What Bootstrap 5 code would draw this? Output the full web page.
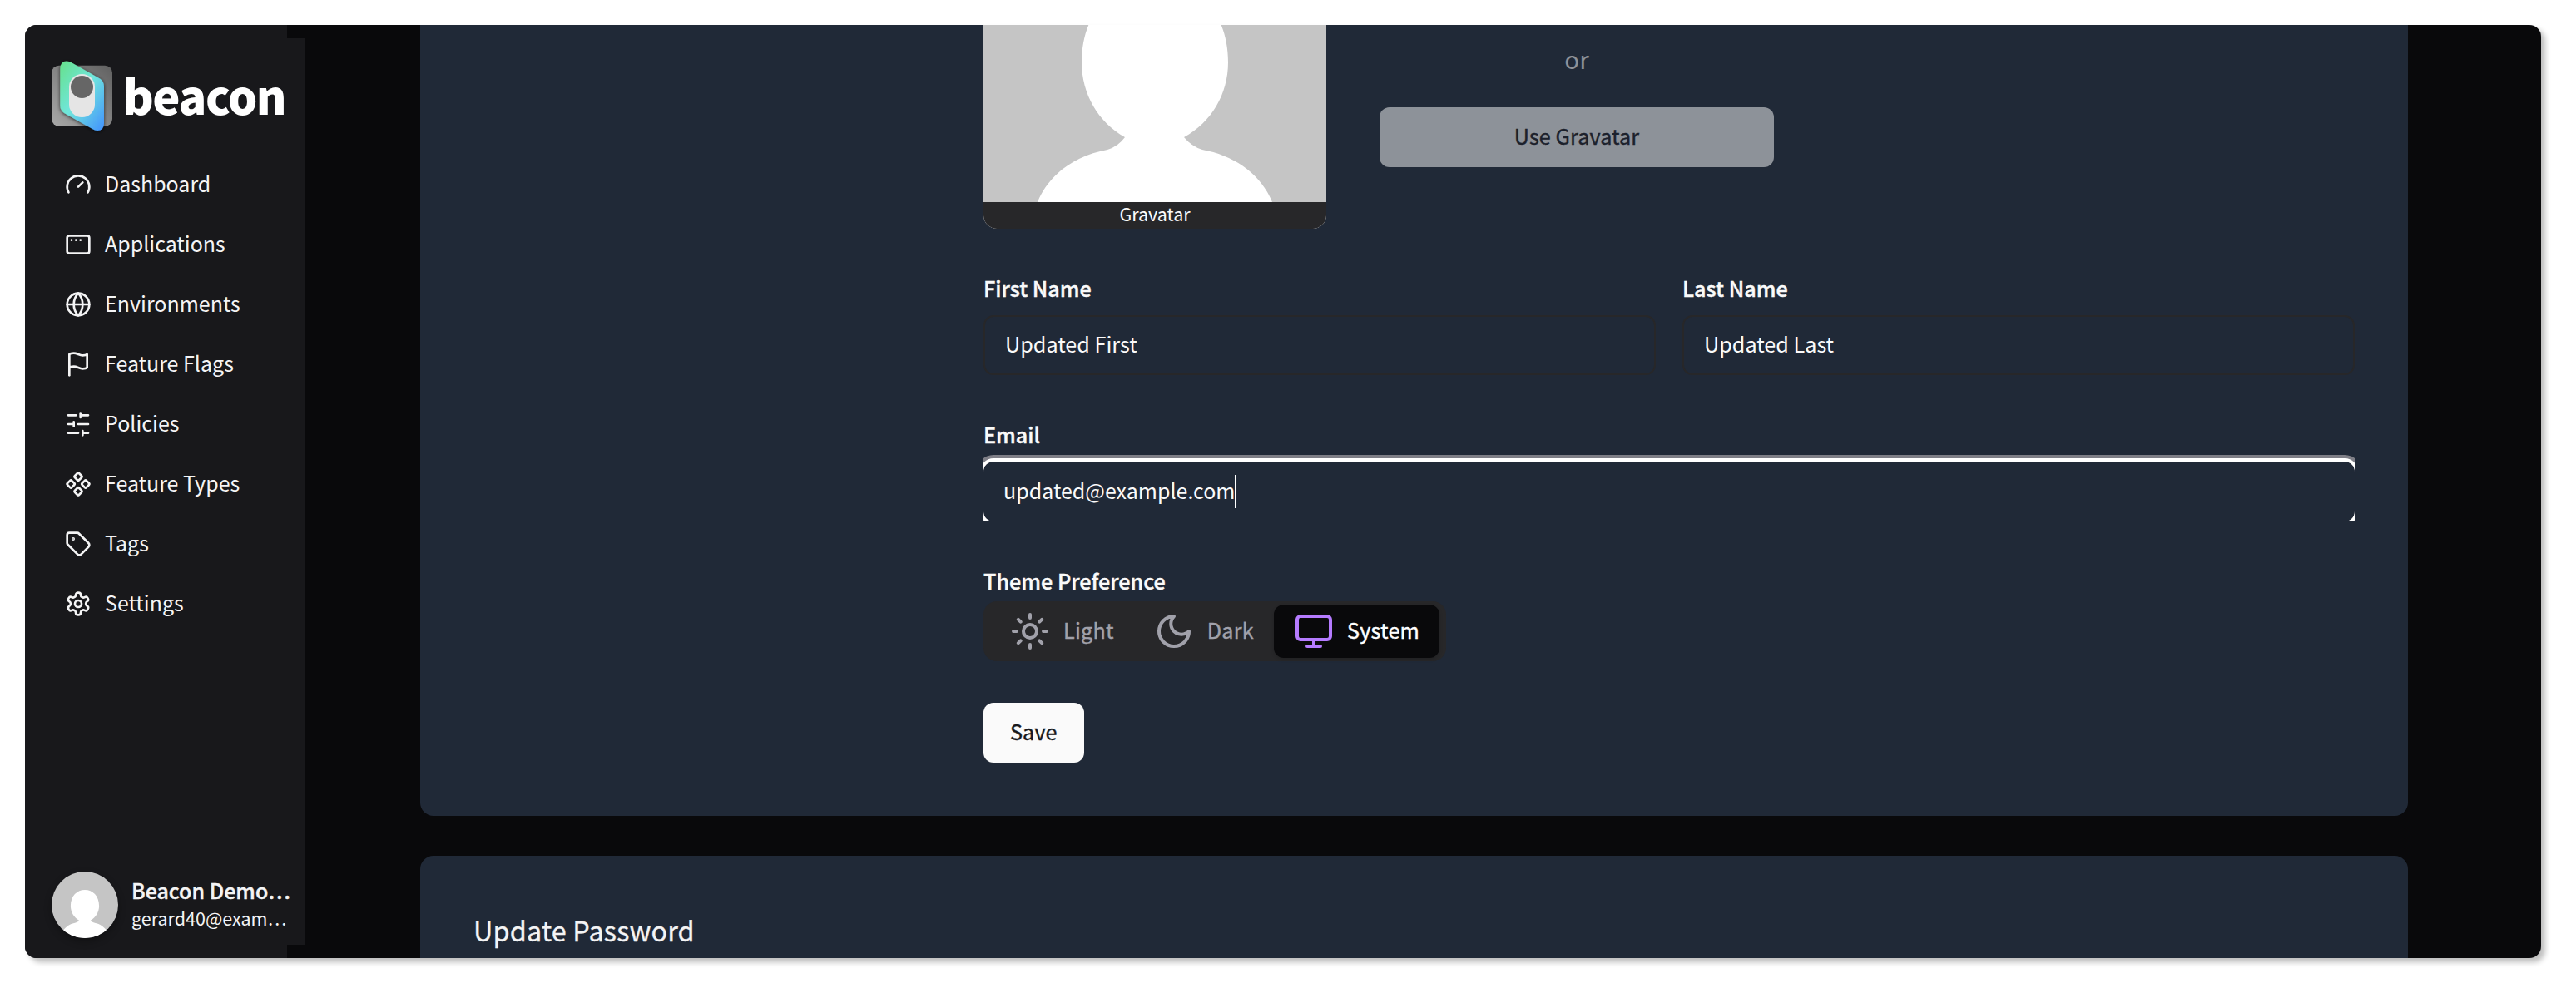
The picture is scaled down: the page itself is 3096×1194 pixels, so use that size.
<!DOCTYPE html>
<html lang="en">
<head>
<meta charset="utf-8">
<title>Beacon - Profile</title>
<link rel="stylesheet" href="https://cdn.jsdelivr.net/npm/bootstrap@5.3.0/dist/css/bootstrap.min.css">
<style>
  body { margin: 0; padding: 30px 42px 42px 30px; background: #fff; color: #fafafa; font-family: "Noto Sans CJK SC", "Noto Sans", sans-serif; font-size: 25.2px; line-height: 28px; }
  .app-window { height: 1122px; background: #09090b; border-radius: 14px; box-shadow: 5px 5px 6px rgba(0,0,0,.25); }
  .side { width: 336px; background: #18181b; padding: 38px 0 24px; }
  .side::before, .side::after { content: ""; position: absolute; right: 0; width: 21px; height: 16px; background: #09090b; }
  .side::before { top: 0; }
  .side::after { bottom: 0; }
  .brand { margin: 0 0 22px 28px; height: 96px; }
  .brand svg { width: 84px; height: 96px; }
  .brand-name { font-weight: 900; font-size: 56px; line-height: 90px; letter-spacing: -1.5px; color: #fff; margin-left: 6px; padding-bottom: 5px; }
  .side-nav .nav-link { height: 72px; padding: 0 0 0 48px; gap: 16px; color: #f4f4f5; font-size: 25px; }
  .side-nav svg { width: 32px; height: 32px; }
  .lift { padding-bottom: 4px; }
  .stroke-icon { fill: none; stroke: currentColor; stroke-width: 2; stroke-linecap: round; stroke-linejoin: round; flex: none; }
  .user-row { padding-left: 32px; gap: 16px; }
  .user-pic { width: 80px; height: 80px; border-radius: 50%; box-shadow: 0 4px 10px rgba(0,0,0,.3); }
  .user-text { padding-bottom: 5px; color: #f4f4f5; }
  .user-name { font-weight: 500; font-size: 25px; line-height: 36px; -webkit-text-stroke: .4px currentColor; }
  .user-mail { font-size: 21.5px; line-height: 30px; padding-top: 1px; }
  .page-main { padding: 0 160px 0 139px; gap: 48px; }
  .panel { background: #202937; border: 0; border-radius: 0 0 16px 16px; color: inherit; flex: none; }
  .panel-profile { height: 951px; padding: 0 64px 64px; }
  .panel-password { height: 200px; border-radius: 16px 16px 0 0; padding: 71px 64px 0; }
  .panel-password h2 { font-size: 32.4px; line-height: 36px; font-weight: 400; margin: 0; color: #f4f4f5; letter-spacing: .16px; -webkit-text-stroke: .3px currentColor; }
  .intro-col { width: 613px; flex: none; }
  .fields { gap: 57px; }
  .avatar-row { gap: 64px; }
  .avatar-card { width: 412px; height: 245px; border-radius: 0 0 16px 16px; background: #c5c5c5; }
  .avatar-card svg { height: 213px; width: 412px; }
  .avatar-label { height: 32px; line-height: 28px; font-size: 21.5px; background: #272729; border-radius: 0 0 16px 16px; }
  .avatar-actions { width: 474px; padding-top: 22px; }
  .or-text { font-size: 29.5px; line-height: 36px; margin-bottom: 41px; color: #8d9198; }
  .btn-main { height: 72px; border: 0; border-radius: 12px; font-size: 25.2px; line-height: 28px; font-weight: 400; letter-spacing: .1px; -webkit-text-stroke: .4px currentColor; padding: 0 32px 4px; background: #fafafa; color: #18181b; }
  .btn-main:disabled { background: #8d9299; color: #1c212c; opacity: 1; }
  .field-label { font-weight: 500; margin: 0 0 19px; line-height: 28px; display: block; -webkit-text-stroke: .4px currentColor; }
  .field-label.tight { margin-bottom: 11px; }
  .name-row { gap: 32px; }
  .form-control.field-input, .form-control.field-input:focus { height: 72px; border: 2px solid #272729; border-radius: 12px; background: transparent; color: #fafafa; font-size: 25.2px; padding: 0 24px 4px; line-height: 28px; box-shadow: none; }
  .ring-clip { padding-top: 8px; height: 80px; overflow: hidden; }
  .form-control.field-input.field-focus { border: 0; font-size: 25px; box-shadow: 0 0 0 4px #fff, 0 0 0 8px #7e7e86; }
  .caret { width: 2px; height: 40px; margin: 4px 0 0 -1px; background: #fff; }
  .theme-toggle { height: 72px; background: #272729; border-radius: 16px; padding: 4px 8px; width: fit-content; }
  .theme-opt { height: 64px; padding: 0 24px; gap: 16px; border-radius: 12px; color: #a1a1aa; letter-spacing: .24px; -webkit-text-stroke: .4px currentColor; }
  .theme-opt.on { background: #09090b; color: #fff; box-shadow: 0 2px 4px rgba(0,0,0,.15); }
  .theme-opt svg { width: 48px; height: 48px; }
  .theme-opt.on svg { color: #b57bff; }
  .save-btn { margin-top: -7px; align-self: flex-start; }
</style>
<script src="https://cdn.jsdelivr.net/npm/bootstrap@5.3.0/dist/js/bootstrap.bundle.min.js"></script>
</head>
<body>
<svg width="0" height="0" class="position-absolute">
  <symbol id="person" viewBox="0 0 412 412">
    <path fill="#fff" d="M170 302C138 284 118 250 118 212C118 150 158 113 206 113S294 150 294 212C294 250 274 284 241 302Q250 313 263 317C302 324 334 347 347 380Q353 395 354 412H58Q59 395 65 380C78 347 110 324 149 317Q162 313 170 302Z"/>
  </symbol>
</svg>
<div class="app-window d-flex overflow-hidden">
  <aside class="side position-relative d-flex flex-column flex-shrink-0">
    <div class="brand d-flex align-items-center">
      <svg viewBox="58 68 84 96">
        <defs>
          <linearGradient id="gTile" x1="0" y1="1" x2="1" y2="0"><stop offset="0" stop-color="#a8a8a8"/><stop offset="1" stop-color="#606060"/></linearGradient>
          <linearGradient id="gFace" x1="0" y1="0" x2=".9" y2="1"><stop offset="0" stop-color="#66e08a"/><stop offset=".5" stop-color="#70e6dc"/><stop offset="1" stop-color="#4699fb"/></linearGradient>
          <filter id="soft" x="-30%" y="-30%" width="160%" height="160%"><feDropShadow dx="0" dy="1" stdDeviation="2.2" flood-opacity=".7"/></filter>
        </defs>
        <rect x="62" y="78.7" width="73" height="73.3" rx="9" fill="url(#gTile)"/>
        <path filter="url(#soft)" fill="url(#gFace)" d="M72.3 83Q72.3 73.5 80 73.5Q83 73.5 86 75.3L120 94.5Q125 97.500 125 104V148Q125 157 117 157Q114 157 111 155L78 136.500Q72.300 133 72.300 127Z"/>
        <rect x="83" y="89" width="31" height="52" rx="15.500" fill="#e5e5e5"/>
        <circle cx="98.500" cy="104.500" r="13.500" fill="#666"/>
      </svg>
      <span class="brand-name">beacon</span>
    </div>
    <nav class="side-nav nav flex-column flex-nowrap">
      <a class="nav-link d-flex align-items-center"><svg class="stroke-icon" viewBox="0 0 24 24"><path d="m12 14 4-4"/><path d="M3.340 19a10 10 0 1 1 17.320 0"/></svg><span class="lift">Dashboard</span></a>
      <a class="nav-link d-flex align-items-center"><svg class="stroke-icon" viewBox="0 0 24 24"><rect width="20" height="16" x="2" y="4" rx="2"/><path d="M6 8h.01M10 8h.01M14 8h.01"/></svg><span class="lift">Applications</span></a>
      <a class="nav-link d-flex align-items-center"><svg class="stroke-icon" viewBox="0 0 24 24"><circle cx="12" cy="12" r="10"/><path d="M12 2a14.500 14.500 0 0 0 0 20 14.500 14.500 0 0 0 0-20"/><path d="M2 12h20"/></svg><span class="lift">Environments</span></a>
      <a class="nav-link d-flex align-items-center"><svg class="stroke-icon" viewBox="0 0 24 24"><path d="M4 15s1-1 4-1 5 2 8 2 4-1 4-1V3s-1 1-4 1-5-2-8-2-4 1-4 1z"/><path d="M4 22v-7"/></svg><span class="lift">Feature Flags</span></a>
      <a class="nav-link d-flex align-items-center"><svg class="stroke-icon" viewBox="0 0 24 24"><path d="M21 4h-7M10 4H3M21 12h-9M8 12H3M21 20h-5M12 20H3M14 2v4M8 10v4M16 18v4"/></svg><span class="lift">Policies</span></a>
      <a class="nav-link d-flex align-items-center"><svg class="stroke-icon" viewBox="0 0 24 24"><path d="M15.536 11.293a1 1 0 0 0 0 1.414l2.376 2.377a1 1 0 0 0 1.414 0l2.377-2.377a1 1 0 0 0 0-1.414l-2.377-2.377a1 1 0 0 0-1.414 0z"/><path d="M2.297 11.293a1 1 0 0 0 0 1.414l2.377 2.377a1 1 0 0 0 1.414 0l2.377-2.377a1 1 0 0 0 0-1.414L6.088 8.916a1 1 0 0 0-1.414 0z"/><path d="M8.916 17.912a1 1 0 0 0 0 1.415l2.377 2.376a1 1 0 0 0 1.414 0l2.377-2.376a1 1 0 0 0 0-1.415l-2.377-2.376a1 1 0 0 0-1.414 0z"/><path d="M8.916 4.674a1 1 0 0 0 0 1.414l2.377 2.376a1 1 0 0 0 1.414 0l2.377-2.376a1 1 0 0 0 0-1.414l-2.377-2.377a1 1 0 0 0-1.414 0z"/></svg><span class="lift">Feature Types</span></a>
      <a class="nav-link d-flex align-items-center"><svg class="stroke-icon" viewBox="0 0 24 24"><path d="M12.586 2.586A2 2 0 0 0 11.172 2H4a2 2 0 0 0-2 2v7.172a2 2 0 0 0 .586 1.414l8.704 8.704a2.426 2.426 0 0 0 3.420 0l6.580-6.580a2.426 2.426 0 0 0 0-3.420z"/><circle cx="7.500" cy="7.500" r=".5" fill="currentColor"/></svg><span class="lift">Tags</span></a>
      <a class="nav-link d-flex align-items-center"><svg class="stroke-icon" viewBox="0 0 24 24"><path d="M12.220 2h-.44a2 2 0 0 0-2 2v.18a2 2 0 0 1-1 1.730l-.43.25a2 2 0 0 1-2 0l-.15-.08a2 2 0 0 0-2.730.73l-.22.38a2 2 0 0 0 .73 2.730l.15.1a2 2 0 0 1 1 1.720v.51a2 2 0 0 1-1 1.740l-.15.09a2 2 0 0 0-.73 2.730l.22.38a2 2 0 0 0 2.730.73l.15-.08a2 2 0 0 1 2 0l.43.25a2 2 0 0 1 1 1.730V20a2 2 0 0 0 2 2h.44a2 2 0 0 0 2-2v-.18a2 2 0 0 1 1-1.730l.43-.25a2 2 0 0 1 2 0l.15.08a2 2 0 0 0 2.730-.73l.22-.39a2 2 0 0 0-.73-2.730l-.15-.08a2 2 0 0 1-1-1.740v-.5a2 2 0 0 1 1-1.740l.15-.09a2 2 0 0 0 .73-2.730l-.22-.38a2 2 0 0 0-2.730-.73l-.15.08a2 2 0 0 1-2 0l-.43-.25a2 2 0 0 1-1-1.730V4a2 2 0 0 0-2-2z"/><circle cx="12" cy="12" r="3"/></svg><span class="lift">Settings</span></a>
    </nav>
    <div class="user-row d-flex align-items-center mt-auto">
      <svg class="user-pic flex-shrink-0" viewBox="0 0 412 412"><rect width="412" height="412" fill="#c5c5c5"/><use href="#person" width="412" height="412"/></svg>
      <div class="user-text text-nowrap">
        <div class="user-name">Beacon Demo…</div>
        <div class="user-mail">gerard40@exam…</div>
      </div>
    </div>
  </aside>

  <main class="page-main d-flex flex-column flex-grow-1">
    <section class="panel panel-profile d-flex">
      <div class="intro-col"></div>
      <form class="fields d-flex flex-column flex-grow-1">
        <div class="avatar-row d-flex">
          <div class="avatar-card overflow-hidden d-flex flex-column">
            <svg viewBox="0 167 412 213"><use href="#person" width="412" height="412"/></svg>
            <div class="avatar-label text-center">Gravatar</div>
          </div>
          <div class="avatar-actions d-flex flex-column">
            <div class="or-text text-center">or</div>
            <button type="button" class="btn btn-main w-100" disabled>Use Gravatar</button>
          </div>
        </div>
        <div class="name-row d-flex">
          <div class="flex-fill">
            <label class="field-label">First Name</label>
            <input class="form-control field-input" value="Updated First">
          </div>
          <div class="flex-fill">
            <label class="field-label">Last Name</label>
            <input class="form-control field-input" value="Updated Last">
          </div>
        </div>
        <div>
          <label class="field-label tight">Email</label>
          <div class="ring-clip">
            <div class="form-control field-input field-focus d-flex align-items-center"><span>updated@example.com</span><span class="caret"></span></div>
          </div>
        </div>
        <div>
          <label class="field-label tight">Theme Preference</label>
          <div class="theme-toggle d-flex">
            <div class="theme-opt d-flex align-items-center"><svg class="stroke-icon" viewBox="0 0 24 24"><circle cx="12" cy="12" r="4"/><path d="M12 2v2M12 20v2M4.930 4.930l1.410 1.410M17.660 17.660l1.410 1.410M2 12h2M20 12h2M6.340 17.660l-1.410 1.410M19.070 4.930l-1.410 1.410"/></svg><span class="lift">Light</span></div>
            <div class="theme-opt d-flex align-items-center"><svg class="stroke-icon" viewBox="0 0 24 24"><path d="M12 3a6 6 0 0 0 9 9 9 9 0 1 1-9-9Z"/></svg><span class="lift">Dark</span></div>
            <div class="theme-opt on d-flex align-items-center"><svg class="stroke-icon" viewBox="0 0 24 24"><rect width="20" height="14" x="2" y="3" rx="2"/><path d="M8 21h8M12 17v4"/></svg><span class="lift">System</span></div>
          </div>
        </div>
        <button type="button" class="btn btn-main save-btn">Save</button>
      </form>
    </section>
    <section class="panel panel-password">
      <h2>Update Password</h2>
    </section>
  </main>
</div>
</body>
</html>
